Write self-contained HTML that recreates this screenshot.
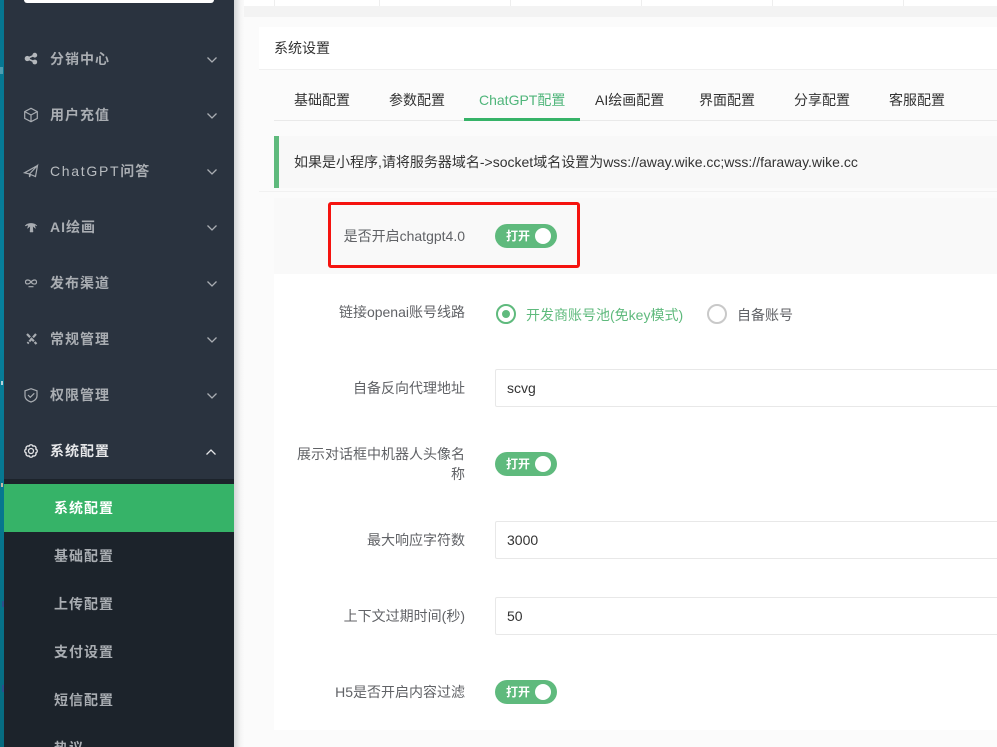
<!DOCTYPE html>
<html lang="zh"><head><meta charset="utf-8"><title>系统设置</title>
<style>
*{box-sizing:border-box}
html,body{margin:0;padding:0;width:997px;height:747px;overflow:hidden;background:#fff}
body{position:relative;font-family:"Liberation Sans","Noto Sans CJK SC",sans-serif;font-size:14px}
.a{position:absolute}
.t{position:absolute;white-space:nowrap;line-height:20px}
.m{left:50px;color:#a9adb2;font-weight:700;letter-spacing:1px}
.s{left:54px;color:#a9adb2;font-weight:700;letter-spacing:1px}
.tab{color:#333;top:90px}
.lb{color:#606266;text-align:right;right:532px}
.sw{position:absolute;left:495px;width:62px;height:24px;border-radius:12px;background:#5fba7d;color:#fff;font-size:12px;font-weight:700}
.sw span{position:absolute;left:11px;top:2px;line-height:20px}
.sw i{position:absolute;right:6px;top:4px;width:16px;height:16px;border-radius:50%;background:#fff}
.in{position:absolute;left:495px;width:510px;height:38px;border:1px solid #e8e8e8;border-radius:2px;background:#fff;color:#333;padding-left:11px;line-height:36px}
svg{position:absolute;fill:none;stroke:#a9adb2}
.ch{left:206px;width:12px;height:8px;stroke-width:1.3}
</style></head><body>
<div class="a" style="left:0;top:0;width:4px;height:747px;background:linear-gradient(180deg,#06758f,#07809c 40%,#066b80)"></div>
<div class="a" style="left:0;top:67px;width:3px;height:7px;background:#4f9db0"></div>
<div class="a" style="left:1px;top:381px;width:2px;height:4px;background:#b9d3da"></div>
<div class="a" style="left:1px;top:483px;width:2px;height:4px;background:#c8b9a5"></div>
<div class="a" style="left:2px;top:601px;width:1.500px;height:6px;background:#2b4f8c"></div>
<div class="a" style="left:2px;top:685px;width:1.500px;height:7px;background:#2b4f8c"></div>
<div class="a" style="left:234px;top:0;width:10px;height:747px;background:linear-gradient(90deg,#d4d6d8,#f6f6f6 70%,#fafafa)"></div>
<div class="a" style="left:3.5px;top:0;width:230.5px;height:747px;background:#2a333f"></div>
<div class="a" style="left:24px;top:-4px;width:190px;height:7px;border-radius:3px;background:#fff"></div>
<div class="a" style="left:3.5px;top:479px;width:230.5px;height:268px;background:#1c232b"></div>
<div class="a" style="left:3.5px;top:484px;width:230.5px;height:48px;background:#36b368"></div>

<svg style="left:0;top:0;width:240px;height:480px" viewBox="0 0 240 480" stroke-width="1.2">
<g fill="#b4b8bc" stroke="none"><circle cx="27.300" cy="58.500" r="2.600"/><circle cx="34.800" cy="55.200" r="2.400"/><circle cx="34.800" cy="62" r="2.400"/></g>
<path d="M27 58.500 34.800 55M27 58.500 34.800 62" stroke-width="1.700" stroke="#b4b8bc"/>
<path d="M31 108.300 37.300 111.600V118.400L31 121.700 24.700 118.400V111.600ZM24.700 111.600 31 115 37.300 111.600M31 115V121.700"/>
<path d="M37.500 165.500 24.500 172.800 29.500 174 37.500 165.500 35.500 176.500 30.500 174.500 29.500 177V174"/>
<path d="M25 226C27 222.500 35 222.500 37 226L34.500 225 35.500 228.500 32.600 226 33 232H30L30.400 226 27.500 228.500 28.500 225Z" fill="#a9adb2" stroke-width=".5"/>
<path d="M31 282C29 279.200 25.500 279.500 25.500 282 25.500 284.700 29 284.500 31 282 33 279.500 36.500 279.200 36.500 282 36.500 284.700 33 284.800 31 282ZM28.500 286.700H33.500"/>
<path d="M27 334 36.500 344M36 334 27.500 343.500" stroke-width="2.200" stroke-dasharray="4.500 1"/>
<path d="M31 388.700 37 390.800V396C37 399 34 401 31 402 28 401 25 399 25 396V390.800Z"/>
<path d="M28 395 30.300 397.300 34.300 393.300"/>
<g stroke="#e4e5e7" stroke-width="1.300"><circle cx="31" cy="451" r="2.500"/>
<path d="M35.800 449A2.100 2.100 0 0 1 35.800 453A2.100 2.100 0 0 1 33 455.800A2.100 2.100 0 0 1 29 455.800A2.100 2.100 0 0 1 26.200 453A2.100 2.100 0 0 1 26.200 449A2.100 2.100 0 0 1 29 446.200A2.100 2.100 0 0 1 33 446.200A2.100 2.100 0 0 1 35.800 449Z"/></g>
</svg>

<div class="t m" style="top:49px">分销中心</div>
<div class="t m" style="top:105px">用户充值</div>
<div class="t m" style="top:161px"><span style="font-weight:400;letter-spacing:1.7px;color:#b8bcc0">ChatGPT</span>问答</div>
<div class="t m" style="top:217px">AI绘画</div>
<div class="t m" style="top:273px">发布渠道</div>
<div class="t m" style="top:329px">常规管理</div>
<div class="t m" style="top:385px">权限管理</div>
<div class="t m" style="top:441px;color:#e6e7e9">系统配置</div>

<svg class="ch" style="top:55.500px" viewBox="0 0 12 8"><path d="M1.500 1.500 6 6 10.500 1.500"/></svg>
<svg class="ch" style="top:111.500px" viewBox="0 0 12 8"><path d="M1.500 1.500 6 6 10.500 1.500"/></svg>
<svg class="ch" style="top:167.500px" viewBox="0 0 12 8"><path d="M1.500 1.500 6 6 10.500 1.500"/></svg>
<svg class="ch" style="top:223.500px" viewBox="0 0 12 8"><path d="M1.500 1.500 6 6 10.500 1.500"/></svg>
<svg class="ch" style="top:279.500px" viewBox="0 0 12 8"><path d="M1.500 1.500 6 6 10.500 1.500"/></svg>
<svg class="ch" style="top:335.500px" viewBox="0 0 12 8"><path d="M1.500 1.500 6 6 10.500 1.500"/></svg>
<svg class="ch" style="top:391.500px" viewBox="0 0 12 8"><path d="M1.500 1.500 6 6 10.500 1.500"/></svg>
<svg class="ch" style="top:448px;left:205px;stroke:#e4e5e7" viewBox="0 0 12 8"><path d="M1.500 6.500 6 2 10.500 6.500"/></svg>

<div class="t s" style="top:498px;color:#fff">系统配置</div>
<div class="t s" style="top:546px">基础配置</div>
<div class="t s" style="top:594px">上传配置</div>
<div class="t s" style="top:642px">支付设置</div>
<div class="t s" style="top:690px">短信配置</div>
<div class="t s" style="top:738px">热议</div>

<div class="a" style="left:244px;top:0;width:753px;height:17px;background:#f3f3f3"></div>
<div class="a" style="left:244px;top:0;width:753px;height:6px;background:#fff"></div>
<div class="a" style="left:274px;top:0;width:1px;height:6px;background:#eee"></div>
<div class="a" style="left:379px;top:0;width:1px;height:6px;background:#eee"></div>
<div class="a" style="left:510px;top:0;width:1px;height:6px;background:#eee"></div>
<div class="a" style="left:641px;top:0;width:1px;height:6px;background:#eee"></div>
<div class="a" style="left:772px;top:0;width:1px;height:6px;background:#eee"></div>
<div class="a" style="left:903px;top:0;width:1px;height:6px;background:#eee"></div>
<div class="a" style="left:244px;top:17px;width:753px;height:730px;background:#fbfbfb"></div>
<div class="a" style="left:259px;top:27px;width:738px;height:42px;background:#fff"></div>
<div class="a" style="left:259px;top:69px;width:738px;height:1px;background:#f0f0f0"></div>
<div class="t" style="left:274px;top:38px;color:#333">系统设置</div>

<div class="a" style="left:274px;top:120px;width:723px;height:1px;background:#e9e9e9"></div>
<div class="a" style="left:464px;top:118px;width:116px;height:3px;background:#36b368"></div>
<div class="t tab" style="left:294px">基础配置</div>
<div class="t tab" style="left:389px">参数配置</div>
<div class="t tab" style="left:479px;color:#4fb57a">ChatGPT配置</div>
<div class="t tab" style="left:595px">AI绘画配置</div>
<div class="t tab" style="left:699px">界面配置</div>
<div class="t tab" style="left:794px">分享配置</div>
<div class="t tab" style="left:889px">客服配置</div>

<div class="a" style="left:274px;top:136px;width:723px;height:52px;background:#f8f8f8;border-left:5px solid #5fba7d"></div>
<div class="t" style="left:294px;top:152px;color:#333">如果是小程序,请将服务器域名-&gt;socket域名设置为wss://away.wike.cc;wss://faraway.wike.cc</div>
<div class="a" style="left:259px;top:191px;width:738px;height:1px;background:#f1f1f1"></div>

<div class="a" style="left:274px;top:198px;width:723px;height:76px;background:#f9f9f9"></div>
<div class="a" style="left:274px;top:274px;width:723px;height:456px;background:#fff"></div>

<div class="a" style="left:328px;top:202px;width:252px;height:66px;border:3px solid #f5130f;border-radius:3px"></div>
<div class="t lb" style="top:226px">是否开启chatgpt4.0</div>
<div class="sw" style="top:224px"><span>打开</span><i></i></div>

<div class="t lb" style="top:302px">链接openai账号线路</div>
<div class="a" style="left:496px;top:304px;width:20px;height:20px;border:2px solid #5fba7d;border-radius:50%;background:#fff"></div>
<div class="a" style="left:502px;top:310px;width:8px;height:8px;border-radius:50%;background:#5fba7d"></div>
<div class="t" style="left:526px;top:305px;color:#5fba7d">开发商账号池(免key模式)</div>
<div class="a" style="left:707px;top:304px;width:20px;height:20px;border:2px solid #c9c9c9;border-radius:50%;background:#fff"></div>
<div class="t" style="left:737px;top:305px;color:#606266">自备账号</div>

<div class="t lb" style="top:378px">自备反向代理地址</div>
<div class="in" style="top:369px">scvg</div>

<div class="t lb" style="top:444px">展示对话框中机器人头像名</div>
<div class="t lb" style="top:464px">称</div>
<div class="sw" style="top:452px"><span>打开</span><i></i></div>

<div class="t lb" style="top:530px">最大响应字符数</div>
<div class="in" style="top:521px">3000</div>

<div class="t lb" style="top:606px">上下文过期时间(秒)</div>
<div class="in" style="top:597px">50</div>

<div class="t lb" style="top:682px">H5是否开启内容过滤</div>
<div class="sw" style="top:680px"><span>打开</span><i></i></div>
</body></html>
